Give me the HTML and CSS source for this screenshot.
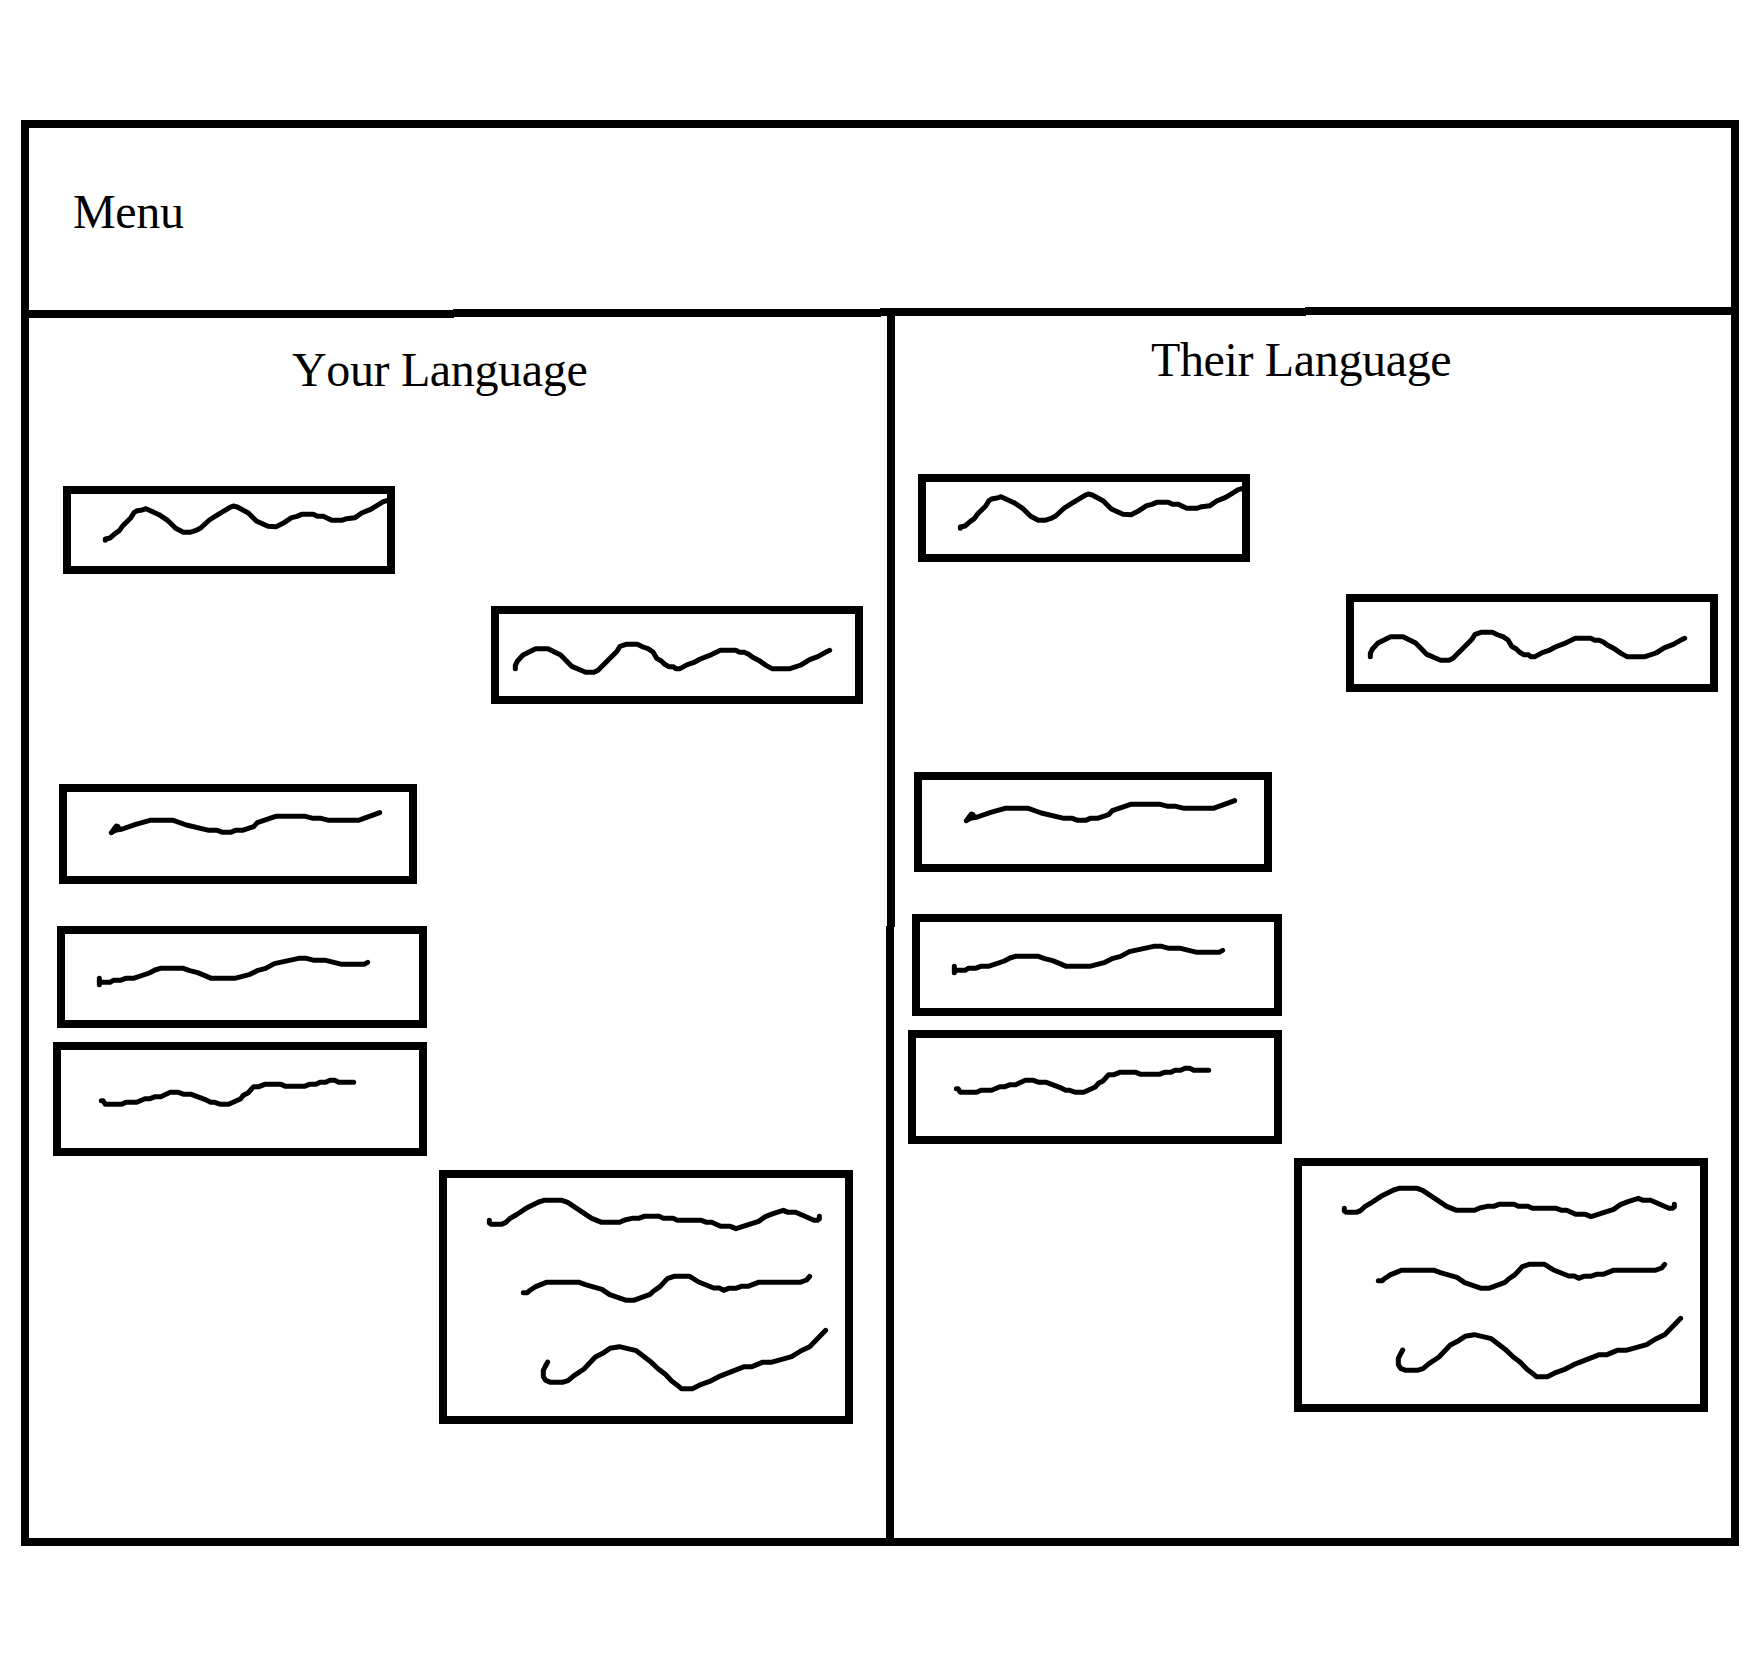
FILE: index.html
```html
<!DOCTYPE html>
<html lang="en">
<head>
<meta charset="utf-8">
<title>Chat wireframe</title>
<link rel="stylesheet" href="styles.css">
</head>
<body>
<!-- Handwriting placeholders shared by both panes -->
<svg class="sprites" aria-hidden="true">
  <symbol id="s1" viewBox="93 72 948 216">
    <path d="M196 211V207L210 204L226 190L238 182L247 169L272 144L282 128L292 122L307 120L318 116L357 134L384 152L407 175L430 187H450L466 182L482 174L508 150L530 136L570 112L580 108L592 111L625 129L649 153L684 169L708 170L732 158L755 143L771 139L785 133H820L832 139H850L875 151H905L920 146L945 143L965 129L992 118L1030 95L1045 91"/>
  </symbol>
  <symbol id="s2" viewBox="57 72 1068 246">
    <path d="M106 236V226L113 212L129 195L167 176H204L242 195L275 229L292 236L317 247H342L354 241L411 184L420 169L438 163H472L489 171L504 176L519 186L530 205L544 213L553 222L566 230H580L587 236H600L622 224L640 218L661 207L687 197L721 181H767L779 187H793L806 193L818 202L841 214L858 226L876 236H930L963 225L989 209L1015 199L1040 185L1049 181"/>
  </symbol>
  <symbol id="s3" viewBox="81 66 1026 252">
    <path d="M214 188L229 168L234 170L237 178M214 188L226 181L247 177L287 163L330 151H400L439 165L507 181H532L548 187H572L586 181H607L641 170L652 158L707 139H796L819 145H843L867 151H955L1019 128"/>
  </symbol>
  <symbol id="s4" viewBox="75 72 1062 258">
    <path d="M178 205V224M178 217H210L220 211H241L257 205H280L328 189L345 180L361 175H430L449 182L473 188L493 196L514 205H584L630 193L654 181L677 175L703 161L776 145H800L822 151H857L906 163H972L983 157"/>
  </symbol>
  <symbol id="s5" viewBox="63 420 1074 294">
    <path d="M184 572H189L196 583H245L258 577H290L315 566H330L346 560H362L391 547H415L432 553H454L494 568L512 577H524L542 583H566L601 567L610 556L624 549L641 530H657L674 523H723L737 529H793L808 523H828L840 517H857L870 511H884L896 517H941"/>
  </symbol>
  <symbol id="s6" viewBox="51 54 1194 714">
    <path d="M178 181V189L184 193H214L228 187L239 176L258 165L288 145L326 126L342 121H396L413 127L485 175L515 187H569L584 180L606 175H626L642 169H687L700 175H729L742 181H814L830 187H845L872 199H901L918 206L986 184L1006 170L1029 161L1060 151L1074 157H1097L1152 181H1162L1168 177V169"/>
    <path d="M280 398H292L297 393L317 380L349 367H448L466 374L516 388L539 404L589 421H611L660 403L671 393L690 380L712 356L732 349H779L806 366L851 384H868L881 391L896 385H917L934 379H954L985 367H1110L1130 360L1139 349"/>
    <path d="M353 606L345 621L340 631V650L347 661L362 667H397L414 662L432 647L462 627L496 591L521 578L540 565L568 560L619 572L664 607L685 627L706 643L725 663L740 674L754 686H787L814 673L837 665L866 650L943 620H966L997 607H1023L1085 590L1112 573L1139 560L1187 511"/>
  </symbol>
</svg>

<main class="frame">
  <header class="menu"><h1 class="label">Menu</h1></header>
  <!-- Ruled line under the menu, slightly stepped -->
  <svg class="rule" viewBox="0 0 1702 11" shape-rendering="crispEdges" aria-hidden="true">
    <path d="M0 3H425V11H0ZM424 2H852V10H424ZM851 1H1277V9H851ZM1276 0H1702V8H1276ZM858 8H866V11H858Z"/>
  </svg>
  <div class="panes">
    <section class="pane pane-yours">
      <h2 class="label">Your Language</h2>
      <div class="messages">
        <div class="bubble b1"><svg><use href="#s1"/></svg></div>
        <div class="bubble b2"><svg><use href="#s2"/></svg></div>
        <div class="bubble b3"><svg><use href="#s3"/></svg></div>
        <div class="bubble b4"><svg><use href="#s4"/></svg></div>
        <div class="bubble b5"><svg><use href="#s5"/></svg></div>
        <div class="bubble b6"><svg><use href="#s6"/></svg></div>
      </div>
    </section>
    <svg class="divider" viewBox="0 0 9 1220" shape-rendering="crispEdges" aria-hidden="true">
      <path d="M1 0H9V609H1ZM0 608H8V1220H0Z"/>
    </svg>
    <section class="pane pane-theirs">
      <h2 class="label">Their Language</h2>
      <div class="messages">
        <div class="bubble b1"><svg><use href="#s1"/></svg></div>
        <div class="bubble b2"><svg><use href="#s2"/></svg></div>
        <div class="bubble b3"><svg><use href="#s3"/></svg></div>
        <div class="bubble b4"><svg><use href="#s4"/></svg></div>
        <div class="bubble b5"><svg><use href="#s5"/></svg></div>
        <div class="bubble b6"><svg><use href="#s6"/></svg></div>
      </div>
    </section>
  </div>
</main>
</body>
</html>
```

FILE: styles.css
```css
* {
  box-sizing: border-box;
}

body {
  margin: 0;
  padding: 120px 22px 114px 21px;
  background: #fff;
  color: #000;
  font-family: "Liberation Serif", "Times New Roman", serif;
}

.sprites {
  display: none;
}

.frame {
  height: 1426px;
  border: 8px solid #000;
}

.label {
  margin: 0;
  font-size: 48px;
  font-weight: 400;
  line-height: 48px;
  font-kerning: none;
  letter-spacing: -0.35px;
  white-space: nowrap;
}

.menu {
  height: 179px;
  padding: 60px 0 0 44px;
}

.rule {
  display: block;
  width: 1702px;
  height: 11px;
}

.panes {
  display: grid;
  grid-template-columns: 857px 9px 836px;
  height: 1220px;
}

.divider {
  display: block;
  width: 9px;
  height: 1220px;
}

.pane-yours {
  padding: 28px 0 0 24px;
}

.pane-yours .label {
  padding-left: 239px;
}

.pane-theirs {
  padding: 18px 0 0 13px;
}

.pane-theirs .label {
  padding-left: 243px;
}

.messages {
  display: flex;
  flex-direction: column;
  width: 810px;
  padding-top: 92px;
}

.pane-theirs .messages {
  padding-top: 90px;
}

.bubble {
  border: 8px solid #000;
}

.bubble svg {
  display: block;
  width: 100%;
  height: 100%;
  fill: none;
  stroke: #000;
  stroke-width: 15px;
  stroke-linecap: round;
  stroke-linejoin: round;
}

.b1 { width: 332px; height: 88px; margin-left: 10px; }
.b2 { width: 372px; height: 98px; margin: 32px 0 0 438px; }
.b3 { width: 358px; height: 100px; margin: 80px 0 0 6px; }
.b4 { width: 370px; height: 102px; margin: 42px 0 0 4px; }
.b5 { width: 374px; height: 114px; margin-top: 14px; }
.b6 { width: 414px; height: 254px; margin: 14px 0 0 386px; }
```
